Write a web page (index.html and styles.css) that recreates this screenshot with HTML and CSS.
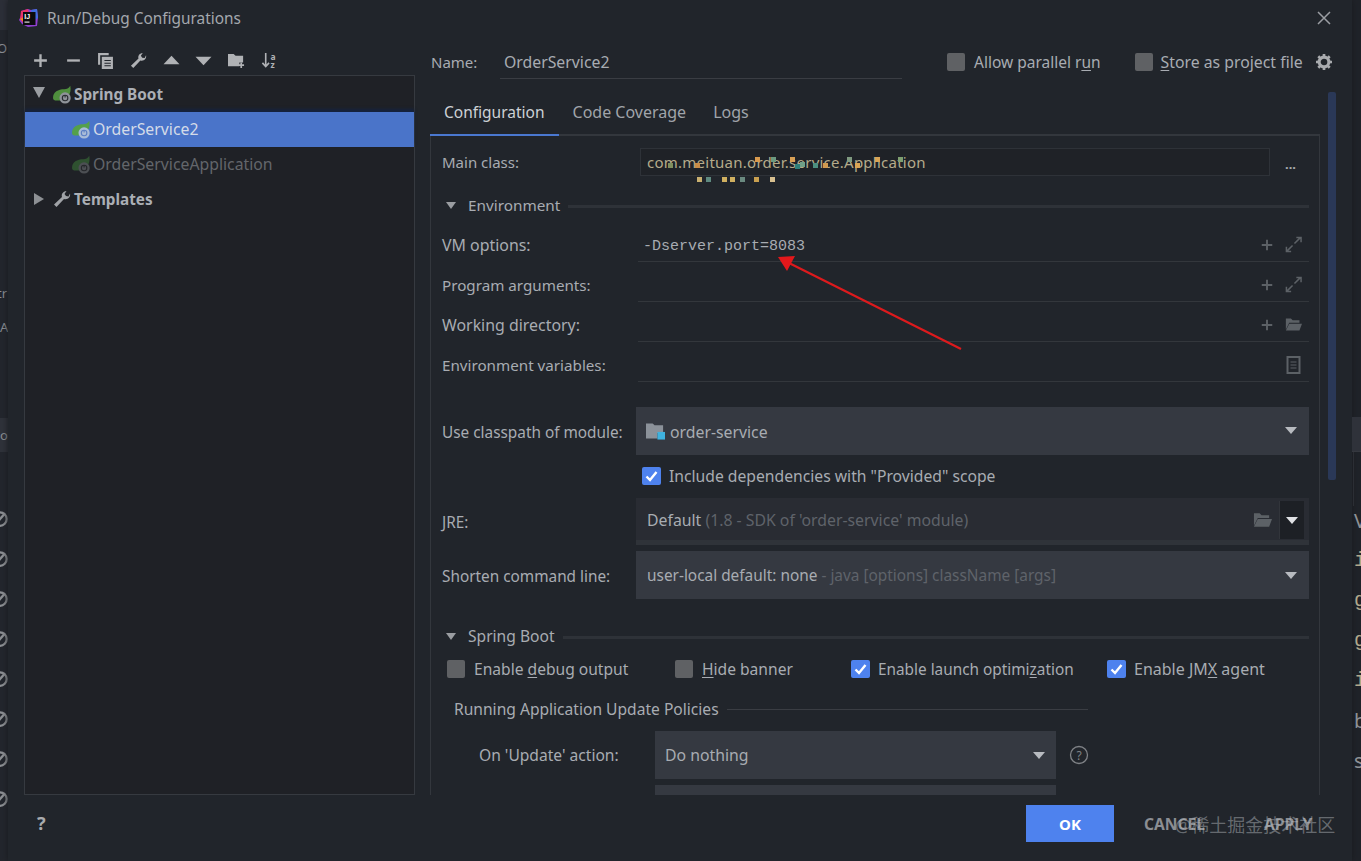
FILE: index.html
```html
<!DOCTYPE html>
<html lang="en">
  <head>
    <meta charset="UTF-8" />
    <title>Run/Debug Configurations</title>
    <link rel="stylesheet" href="styles.css">
  </head>
  <body>
    <svg class="defs" width="0" height="0">
      <symbol id="plus" viewBox="0 0 16 16"><path d="M8 2v12M2 8h12" stroke="currentColor" stroke-width="2.2" fill="none"/></symbol>
      <symbol id="expand" viewBox="0 0 18 18"><path d="M10 8l6-6M12 1.500h5v5M8 10l-6 6M1.500 11.500v5h5" stroke="currentColor" stroke-width="1.600" fill="none"/></symbol>
      <symbol id="folderOpen" viewBox="0 0 20 16"><path d="M1 1h6l2 2h8v3H5L1 14zM5 7h15l-3 8H1z" fill="currentColor"/></symbol>
      <symbol id="wrench" viewBox="0 0 18 18"><path d="M1 14.500L9 7c-.8-2.600.6-5.500 4.500-6l-2 3 1.500 2 2.500.4L17 3.500c.8 3.600-2.300 6.500-6 5.500L3.500 17z" fill="currentColor"/></symbol>
      <symbol id="spring" viewBox="0 0 24 22">
        <path d="M1 15C1 8 7 5 14 5c3 0 5-1 7-4 1 5 0 9-2 11l-8 6H5C3 18 1 17 1 15z" fill="currentColor"/>
        <circle cx="15" cy="15" r="6.500" fill="var(--gear)"/>
        <circle cx="15" cy="15" r="3.200" fill="none" stroke="var(--gear-in)" stroke-width="1.300"/>
        <path d="M15 11.500v3" stroke="var(--gear-in)" stroke-width="1.300"/>
      </symbol>
      <symbol id="blocked" viewBox="0 0 16 16"><circle cx="8" cy="8" r="6" fill="none" stroke="currentColor" stroke-width="2"/><path d="M3.500 13L12.500 3" stroke="currentColor" stroke-width="2"/></symbol>
    </svg>

    <div class="ide_left">
      <div class="ide_tab"></div>
      <div class="ide_txt first_txt">O</div>
      <div class="ide_txt tr_txt">tr</div>
      <div class="ide_txt a_txt">A</div>
      <div class="ide_band">o</div>
      <div class="ide_blocks">
        <svg class="ide_block"><use href="#blocked"/></svg>
        <svg class="ide_block"><use href="#blocked"/></svg>
        <svg class="ide_block"><use href="#blocked"/></svg>
        <svg class="ide_block"><use href="#blocked"/></svg>
        <svg class="ide_block"><use href="#blocked"/></svg>
        <svg class="ide_block"><use href="#blocked"/></svg>
        <svg class="ide_block"><use href="#blocked"/></svg>
        <svg class="ide_block"><use href="#blocked"/></svg>
      </div>
    </div>

    <div class="dialog">
      <div class="title_bar">
        <svg class="app_logo" viewBox="0 0 20 20">
          <path d="M2 3l7-2 3 1 6-1 1 8-1 9-9 1-6-3-3-4 2-4z" fill="#8f3fd0"/>
          <path d="M2 3l7-2 2 9-6 6-4-5z" fill="#e8336b"/>
          <path d="M12 2l6-1 1 9-5 3z" fill="#3f6fe0"/>
          <path d="M1 11l4-2 1 6z" fill="#f08a24"/>
          <rect x="4" y="4" width="12.500" height="13" fill="#0b0b0d"/>
          <text x="5.200" y="10.800" class="logo_txt">IJ</text>
          <rect x="5.500" y="13.500" width="5" height="1.200" fill="#ddd"/>
        </svg>
        <span class="title_txt">Run/Debug Configurations</span>
        <svg class="close_btn" viewBox="0 0 14 14"><path d="M1 1l12 12M13 1L1 13" stroke="currentColor" stroke-width="1.500"/></svg>
      </div>

      <div class="main">
        <div class="side">
          <div class="toolbar">
            <div class="tool"><svg class="tool_ico"><use href="#plus"/></svg></div>
            <div class="tool"><svg class="tool_ico" viewBox="0 0 16 16"><path d="M2 8h12" stroke="currentColor" stroke-width="2.200"/></svg></div>
            <div class="tool"><svg class="tool_ico" viewBox="0 0 16 16"><path d="M1 1h10v2H3v9H1z" fill="currentColor"/><path d="M4.500 4.500H15V16H4.500z" fill="currentColor"/><path d="M7 8h6M7 10.500h6M7 13h6" stroke="#21252b"/></svg></div>
            <div class="tool"><svg class="tool_ico"><use href="#wrench"/></svg></div>
            <div class="tool"><svg class="tool_ico" viewBox="0 0 16 16"><path d="M8 3.500l7.500 8H.5z" fill="currentColor"/></svg></div>
            <div class="tool"><svg class="tool_ico" viewBox="0 0 16 16"><path d="M.5 4.500h15L8 12.500z" fill="currentColor"/></svg></div>
            <div class="tool"><svg class="tool_ico" viewBox="0 0 18 16"><path d="M0 1h6l2 2h8v7h-4v4H0z" fill="currentColor"/><path d="M14 10v6M11 13h6" stroke="currentColor" stroke-width="1.800"/></svg></div>
            <div class="tool"><svg class="tool_ico" viewBox="0 0 18 18"><path d="M5 1v14M1.500 11.500L5 15.500l3.500-4" stroke="currentColor" stroke-width="1.700" fill="none"/><text x="10" y="8" class="az_txt">a</text><text x="10" y="17" class="az_txt">z</text></svg></div>
          </div>
          <div class="tree">
            <div class="tree_row tree_top">
              <span class="tri_down"></span>
              <svg class="spring_ico"><use href="#spring"/></svg>
              <span>Spring Boot</span>
            </div>
            <div class="tree_row tree_child tree_sel">
              <svg class="spring_ico"><use href="#spring"/></svg>
              <span>OrderService2</span>
            </div>
            <div class="tree_row tree_child tree_off">
              <svg class="spring_ico"><use href="#spring"/></svg>
              <span>OrderServiceApplication</span>
            </div>
            <div class="tree_row tree_top">
              <span class="tri_right"></span>
              <svg class="wrench_ico"><use href="#wrench"/></svg>
              <span>Templates</span>
            </div>
          </div>
        </div>

        <div class="right">
          <div class="content">
            <div class="name_row">
              <span class="name_lbl">Name:</span>
              <span class="name_field">OrderService2</span>
              <label class="check check_parallel"><span class="box"></span><span>Allow parallel r<u>u</u>n</span></label>
              <label class="check check_store"><span class="box"></span><span><u>S</u>tore as project file</span></label>
              <svg class="gear_ico" viewBox="0 0 18 18"><circle cx="9" cy="9" r="5.500" fill="none" stroke="currentColor" stroke-width="3.500"/><path d="M9 0v3M9 15v3M0 9h3M15 9h3M2.600 2.600l2.200 2.200M13.200 13.200l2.200 2.200M2.600 15.400l2.200-2.200M13.200 4.800l2.200-2.200" stroke="currentColor" stroke-width="3"/></svg>
            </div>

            <div class="tabs">
              <div class="tab tab_on">Configuration</div>
              <div class="tab">Code Coverage</div>
              <div class="tab">Logs</div>
            </div>

            <div class="panel">
              <div class="main_class">
                <span class="lbl">Main class:</span>
                <div class="class_field">
                  <span class="class_txt">com.meituan.order.service.Application</span>
                  <span class="mosaic"></span>
                </div>
                <span class="dots">...</span>
              </div>

              <div class="section env_section">
                <span class="tri_small"></span>
                <span class="section_txt">Environment</span>
                <span class="section_line"></span>
              </div>

              <div class="text_row">
                <span class="lbl lbl_wide">VM options:</span>
                <div class="text_field">
                  <span class="mono">-Dserver.port=8083</span>
                  <svg class="field_ico plus_ico"><use href="#plus"/></svg>
                  <svg class="field_ico"><use href="#expand"/></svg>
                </div>
              </div>
              <div class="text_row">
                <span class="lbl">Program arguments:</span>
                <div class="text_field">
                  <svg class="field_ico plus_ico"><use href="#plus"/></svg>
                  <svg class="field_ico"><use href="#expand"/></svg>
                </div>
              </div>
              <div class="text_row">
                <span class="lbl lbl_wide">Working directory:</span>
                <div class="text_field">
                  <svg class="field_ico plus_ico"><use href="#plus"/></svg>
                  <svg class="field_ico"><use href="#folderOpen"/></svg>
                </div>
              </div>
              <div class="text_row">
                <span class="lbl">Environment variables:</span>
                <div class="text_field">
                  <svg class="field_ico doc_ico" viewBox="0 0 14 18"><path d="M1 1h12v16H1z" fill="none" stroke="currentColor" stroke-width="2"/><path d="M4 6h6M4 9h6M4 12h6" stroke="currentColor" stroke-width="1.200"/></svg>
                </div>
              </div>

              <div class="combo_row module_row">
                <span class="lbl lbl_combo">Use classpath of module:</span>
                <div class="combo combo_wide">
                  <svg class="module_ico" viewBox="0 0 20 18"><path d="M0 1h7l2 2h9v8h-6v6H0z" fill="#8b9199"/><rect x="12" y="10" width="8" height="8" fill="#3fb2de"/></svg>
                  <span>order-service</span>
                  <span class="arrow"></span>
                </div>
              </div>
              <label class="check include_check"><span class="box box_on"><svg viewBox="0 0 18 18"><path d="M4 9.500l3.500 3.500L14 5" stroke="#fff" stroke-width="2.400" fill="none"/></svg></span><span>Include dependencies with "Provided" scope</span></label>

              <div class="combo_row jre_row">
                <span class="lbl lbl_combo">JRE:</span>
                <div class="combo combo_jre combo_wide">
                  <span>Default <span class="hint">(1.8 - SDK of 'order-service' module)</span></span>
                  <svg class="jre_folder"><use href="#folderOpen"/></svg>
                  <span class="arrow_btn"><span class="arrow arrow_w"></span></span>
                </div>
              </div>
              <div class="combo_row short_row">
                <span class="lbl lbl_combo">Shorten command line:</span>
                <div class="combo">
                  <span>user-local default: none <span class="hint">- java [options] className [args]</span></span>
                  <span class="arrow"></span>
                </div>
              </div>

              <div class="section boot_section">
                <span class="tri_small"></span>
                <span class="section_txt">Spring Boot</span>
                <span class="section_line"></span>
              </div>

              <div class="boot_checks">
                <label class="check boot_a"><span class="box"></span><span>Enable <u>d</u>ebug output</span></label>
                <label class="check boot_b"><span class="box"></span><span><u>H</u>ide banner</span></label>
                <label class="check boot_c"><span class="box box_on"><svg viewBox="0 0 18 18"><path d="M4 9.500l3.500 3.500L14 5" stroke="#fff" stroke-width="2.400" fill="none"/></svg></span><span>Enable launch optimi<u>z</u>ation</span></label>
                <label class="check boot_d"><span class="box box_on"><svg viewBox="0 0 18 18"><path d="M4 9.500l3.500 3.500L14 5" stroke="#fff" stroke-width="2.400" fill="none"/></svg></span><span>Enable JM<u>X</u> agent</span></label>
              </div>

              <div class="policy_head">
                <span class="section_txt">Running Application Update Policies</span>
                <span class="policy_line"></span>
              </div>
              <div class="update_row">
                <span class="lbl update_lbl">On 'Update' action:</span>
                <div class="combo combo_update">
                  <span>Do nothing</span>
                  <span class="arrow"></span>
                </div>
                <svg class="help_ico" viewBox="0 0 20 20"><circle cx="10" cy="10" r="8.500" fill="none" stroke="currentColor" stroke-width="1.300"/><text x="10" y="14.500" class="help_txt">?</text></svg>
              </div>
              <div class="combo_stub"></div>
            </div>
          </div>
          <div class="scrollbar"></div>
        </div>
      </div>

      <div class="footer">
        <span class="help_mark">?</span>
        <button class="btn_ok">OK</button>
        <span class="btn_txt btn_cancel">CANCEL</span>
        <span class="btn_txt btn_apply">APPLY</span>
      </div>
    </div>

    <div class="ide_right">
      <div class="ide_right_band"></div>
      <div class="ide_right_gutter"></div>
      <div class="ide_code">V</div>
      <div class="ide_code mono_code">i</div>
      <div class="ide_code mono_code">g</div>
      <div class="ide_code mono_code">g</div>
      <div class="ide_code mono_code">i</div>
      <div class="ide_code">b</div>
      <div class="ide_code">s</div>
    </div>

    <svg class="red_arrow" viewBox="0 0 200 110" width="200" height="110">
      <path d="M186 95L14 9" stroke="#dc1a1d" stroke-width="2.300"/>
      <path d="M3 3L20 2 12 17z" fill="#e3181b"/>
    </svg>
    <div class="watermark">@稀土掘金技术社区</div>
  </body>
</html>
```

FILE: styles.css
```css
* {
  box-sizing: border-box;
}

body {
  margin: 0;
  width: 1361px;
  height: 861px;
  overflow: hidden;
  display: flex;
  position: relative;
  background-color: #202329;
  font-family: "Noto Sans", "Open Sans", sans-serif;
  font-size: 15.6px;
  color: #a8acb2;
}

.defs {
  position: absolute;
}

label {
  cursor: default;
}

u {
  text-underline-offset: 2px;
}

/* ide behind the dialog */
.ide_left {
  width: 8px;
  height: 861px;
  overflow: hidden;
  flex-shrink: 0;
  background-color: #23262d;
  color: #8c8f94;
  font-size: 13px;
}
.ide_tab {
  height: 30px;
  background-color: #2c2f38;
}
.ide_txt {
  height: 20px;
  line-height: 20px;
  white-space: nowrap;
}
.first_txt {
  margin-top: 8px;
  margin-left: -3px;
}
.tr_txt {
  margin-top: 225px;
  margin-left: -3px;
}
.a_txt {
  margin-top: 14px;
}
.ide_band {
  margin-top: 81px;
  height: 34px;
  line-height: 34px;
  background-color: #2f323a;
}
.ide_blocks {
  margin-top: 47px;
  margin-left: -9px;
}
.ide_block {
  display: block;
  width: 18px;
  height: 40px;
  color: #8e9195;
}

.ide_right {
  width: 9px;
  height: 861px;
  overflow: hidden;
  flex-shrink: 0;
  padding-left: 3px;
  padding-top: 417px;
  color: #8e9195;
  font-size: 20px;
}
.ide_right_band {
  height: 35px;
  margin-left: -3px;
  background-color: #2f323a;
  border-bottom: 1px solid #35383f;
}
.ide_right_gutter {
  height: 54px;
  margin-left: -2px;
  border-left: 1px solid #2b2e34;
}
.ide_code {
  height: 40px;
  line-height: 30px;
  margin-left: -1px;
}
.mono_code {
  font-family: "Liberation Mono", monospace;
  color: #b0a88c;
}

.dialog {
  flex: 1;
  min-width: 0;
  height: 861px;
  display: flex;
  flex-direction: column;
  background-color: #21252b;
  box-shadow: 0 0 6px #181a1e;
}

.title_bar {
  height: 36px;
  display: flex;
  align-items: center;
  padding-left: 11px;
  padding-right: 21px;
  flex-shrink: 0;
}
.app_logo {
  width: 20px;
  height: 20px;
  margin-right: 8px;
  margin-top: -1px;
}
.logo_txt {
  font-family: "Liberation Sans", sans-serif;
  font-size: 7px;
  font-weight: bold;
  fill: #fff;
}
.title_txt {
  color: #a4a8ae;
  font-size: 15.4px;
  flex: 1;
}
.close_btn {
  width: 14px;
  height: 14px;
  color: #9b9ea3;
}

.main {
  height: 759px;
  display: flex;
  flex-shrink: 0;
}

/* left side */
.side {
  width: 422px;
  padding-left: 16px;
  flex-shrink: 0;
}
.toolbar {
  height: 39px;
  display: flex;
  align-items: center;
  padding-top: 9px;
  color: #b0b2b5;
}
.tool {
  width: 32.7px;
  display: flex;
  justify-content: center;
}
.tool_ico {
  width: 17px;
  height: 17px;
}
.tree {
  width: 391px;
  height: 720px;
  border: 1px solid #363a40;
  background-color: #1f2126;
  padding-top: 1px;
}
.tree_row {
  height: 35px;
  display: flex;
  align-items: center;
  white-space: nowrap;
  padding-bottom: 2px;
}
.tree_top {
  font-weight: bold;
  font-size: 15.3px;
  color: #abafb5;
  padding-left: 8px;
}
.tree_child {
  padding-left: 46px;
  font-size: 15.8px;
}
.tree_sel {
  background-color: #4a74c9;
  color: #d4dbe8;
  box-shadow: 0 -3px 3px #15233f;
}
.tree_off {
  color: #63666b;
}
.tri_down {
  width: 0;
  height: 0;
  border-left: 6px solid transparent;
  border-right: 6px solid transparent;
  border-top: 11px solid #9a9da1;
  margin-right: 7px;
  margin-top: -2px;
}
.tri_right {
  width: 0;
  height: 0;
  border-top: 6px solid transparent;
  border-bottom: 6px solid transparent;
  border-left: 10px solid #8d9094;
  margin-right: 9px;
  margin-left: 1px;
}
.spring_ico {
  width: 21px;
  height: 19px;
  margin-right: 1px;
  color: #4f8f3d;
  --gear: #8f9399;
  --gear-in: #2a2d32;
  margin-top: 2px;
}
.tree_sel .spring_ico {
  color: #54a04a;
  --gear: #a9bcd8;
  --gear-in: #5c7fc4;
}
.tree_off .spring_ico {
  color: #2f5130;
  --gear: #4c4f53;
  --gear-in: #25272b;
}
.wrench_ico {
  width: 18px;
  height: 18px;
  margin-right: 3px;
  color: #a0a3a7;
}
.az_txt {
  font-family: "Noto Sans", sans-serif;
  font-size: 9px;
  font-weight: bold;
  fill: currentColor;
}

/* right side */
.right {
  flex: 1;
  min-width: 0;
  display: flex;
}
.content {
  width: 890px;
  flex-shrink: 0;
}
.name_row {
  height: 56px;
  display: flex;
  align-items: flex-start;
  position: relative;
  padding-top: 16px;
  padding-left: 1px;
}
.name_row > * {
  flex-shrink: 0;
}
.name_lbl {
  width: 69px;
  font-size: 15px;
}
.name_field {
  width: 402px;
  height: 27px;
  padding-left: 4px;
  border-bottom: 1px solid #3a3d43;
  line-height: 20px;
  font-size: 15.8px;
}
.name_row .check {
  height: 20px;
}
.check {
  display: flex;
  align-items: center;
  white-space: nowrap;
}
.box {
  width: 18px;
  height: 18px;
  border-radius: 2px;
  background-color: #5f6164;
  margin-right: 9px;
  flex-shrink: 0;
}
.box_on {
  background-color: #4e82ee;
  width: 19px;
}
.box_on svg {
  display: block;
  width: 19px;
  height: 18px;
}
.check_parallel {
  margin-left: 45px;
  font-size: 15.5px;
}
.check_store {
  margin-left: 34px;
  font-size: 15.8px;
}
.check_store .box {
  margin-right: 8px;
}
.gear_ico {
  width: 16px;
  height: 16px;
  margin-left: 13px;
  margin-top: 2px;
  color: #a9abae;
}

.tabs {
  height: 44px;
  display: flex;
  border-bottom: 2px solid #33373d;
  color: #a0a4aa;
  font-size: 16px;
}
.tab {
  padding: 0 14px;
  line-height: 40px;
  height: 44px;
}
.tab_on {
  color: #cdd1d6;
  border-bottom: 2px solid #4a78d0;
  font-size: 15.5px;
}
.tab:nth-child(3) {
  padding-left: 13px;
}

.panel {
  height: 659px;
  overflow: hidden;
  border-left: 1px solid #33373d;
  border-right: 1px solid #33373d;
  padding-left: 11px;
  padding-right: 10px;
  padding-top: 12px;
}
.lbl {
  flex-shrink: 0;
  white-space: nowrap;
}

.main_class {
  display: flex;
  align-items: center;
  height: 28px;
}
.main_class .lbl {
  width: 198px;
  font-size: 15px;
}
.class_field {
  width: 630px;
  height: 28px;
  border: 1px solid #2e3238;
  position: relative;
  padding-left: 6px;
  line-height: 27px;
  background-color: #1f2227;
  font-size: 15px;
}
.class_txt {
  color: #b5ab8b;
  white-space: nowrap;
  letter-spacing: 0.25px;
}
.mosaic {
  position: absolute;
  left: 0;
  top: 0;
  width: 5px;
  height: 5px;
  box-shadow:
    114px 8px #d89a4e, 130px 8px #6c9a80, 149px 8px #d8a055, 154px 15px #2f7f7a, 159px 13px #70a088,
    27px 14px #7f8f5e, 54px 14px #c88c48, 172px 14px #4d8f80, 182px 14px #d09a50,
    206px 8px #7f9a80, 214px 14px #d8a455, 234px 8px #d8a455, 257px 8px #7f9f70,
    56px 28px #c9b070, 65px 28px #5f8a80, 81px 28px #d0b060, 89px 28px #d0b060, 99px 28px #6a8a80,
    113px 28px #c9a050, 129px 28px #d8c090;
}
.dots {
  margin-left: 15px;
  line-height: 1;
  font-weight: bold;
  color: #a9abae;
  margin-top: 4px;
  font-size: 13px;
}

.section {
  display: flex;
  align-items: center;
  height: 20px;
}
.tri_small {
  width: 0;
  height: 0;
  border-left: 5px solid transparent;
  border-right: 5px solid transparent;
  border-top: 7px solid #9a9da1;
  margin-right: 12px;
  margin-left: 4px;
}
.section_txt {
  white-space: nowrap;
}
.section_line {
  flex: 1;
  height: 3px;
  background-color: #2e3238;
  margin-left: 8px;
  margin-top: 3px;
}
.env_section {
  margin-top: 19px;
  margin-bottom: 7px;
}
.env_section .section_txt {
  font-size: 15.3px;
}

.text_row {
  height: 40px;
  display: flex;
  align-items: center;
}
.text_row .lbl {
  width: 196px;
  padding-top: 5px;
  font-size: 15.2px;
}
.text_row .lbl_wide {
  font-size: 15.9px;
}
.text_field {
  flex: 1;
  height: 40px;
  border-bottom: 1px solid #33373c;
  display: flex;
  align-items: center;
  justify-content: flex-end;
  padding-top: 6px;
  padding-right: 7px;
  position: relative;
  color: #5c6166;
}
.mono {
  position: absolute;
  left: 5px;
  top: 16px;
  font-family: "Liberation Mono", monospace;
  font-size: 15px;
  color: #a8acb2;
}
.field_ico {
  width: 17px;
  height: 17px;
}
.plus_ico {
  width: 14px;
  height: 14px;
  margin-right: 11px;
}
.doc_ico {
  width: 15px;
  height: 18px;
  margin-right: 1px;
}

.combo_row {
  display: flex;
  align-items: center;
}
.lbl_combo {
  width: 194px;
  font-size: 15.35px;
  padding-top: 1px;
}
.combo {
  flex: 1;
  height: 48px;
  background-color: #353941;
  display: flex;
  align-items: center;
  padding-left: 11px;
  padding-right: 12px;
  position: relative;
  white-space: nowrap;
  font-size: 15.4px;
}
.combo_wide {
  font-size: 15.8px;
}
.module_row {
  margin-top: 25px;
}
.module_row .combo > span {
  padding-top: 1px;
}
.module_ico {
  width: 19px;
  height: 18px;
  margin-left: -1px;
  margin-right: 5px;
}
.arrow {
  width: 0;
  height: 0;
  border-left: 6px solid transparent;
  border-right: 6px solid transparent;
  border-top: 7px solid #b8bbc0;
  margin-left: auto;
}
.module_row .arrow {
  padding-top: 0;
}
.arrow_w {
  border-top-color: #e0e2e5;
  margin: 0;
}
.include_check {
  margin-top: 12px;
  margin-left: 200px;
  height: 18px;
  font-size: 15.7px;
}
.include_check .box {
  margin-right: 8px;
}
.jre_row {
  margin-top: 13px;
  height: 47px;
}
.combo_jre {
  height: 47px;
  background-color: #292c33;
  border-bottom: 5px solid #2f3339;
  padding-right: 5px;
  padding-top: 2px;
}
.hint {
  color: #5f636a;
}
.jre_folder {
  width: 19px;
  height: 16px;
  margin-left: auto;
  margin-right: 7px;
  color: #5c6166;
}
.arrow_btn {
  width: 25px;
  height: 38px;
  background-color: #1d2025;
  border-left: 1px solid #32353b;
  display: flex;
  align-items: center;
  justify-content: center;
}
.short_row {
  margin-top: 6px;
}

.boot_section {
  margin-top: 27px;
}
.boot_checks {
  display: flex;
  margin-top: 13px;
  margin-left: 5px;
  height: 20px;
}
.boot_a {
  width: 228px;
}
.boot_b {
  width: 176px;
}
.boot_c {
  width: 256px;
  font-size: 15.35px;
}
.boot_d {
  font-size: 16px;
}
.boot_checks .box_on {
  margin-right: 8px;
}
.policy_head {
  display: flex;
  align-items: center;
  margin-top: 20px;
  margin-left: 12px;
  height: 20px;
}
.policy_line {
  width: 361px;
  height: 1px;
  background-color: #3a3d43;
  margin-left: 8px;
}
.update_row {
  display: flex;
  align-items: center;
  margin-top: 12px;
  height: 48px;
}
.update_lbl {
  width: 176px;
  margin-left: 37px;
}
.combo_update {
  flex: none;
  width: 401px;
  padding-left: 10px;
  padding-right: 11px;
  font-size: 15.8px;
}
.help_ico {
  width: 20px;
  height: 20px;
  margin-left: 13px;
  color: #7f8286;
}
.help_txt {
  font-size: 12px;
  text-anchor: middle;
  fill: currentColor;
}
.combo_stub {
  width: 401px;
  height: 20px;
  margin-top: 6px;
  margin-left: 213px;
  background-color: #353941;
}

.scrollbar {
  width: 8px;
  height: 388px;
  margin-top: 56px;
  margin-left: 8px;
  border-radius: 2px;
  background-color: #2a3857;
}

/* bottom buttons */
.footer {
  flex: 1;
  display: flex;
  align-items: flex-start;
  padding-top: 10px;
  padding-left: 29px;
  position: relative;
  font-weight: bold;
  color: #8f9297;
}
.help_mark {
  font-size: 18px;
  margin-top: 6px;
  width: 989px;
  color: #a9abae;
}
.btn_ok {
  width: 88px;
  height: 37px;
  border: none;
  background-color: #4e82ee;
  color: #fff;
  font-family: inherit;
  font-size: 15px;
  font-weight: bold;
}
.btn_txt {
  line-height: 38px;
  color: #8b8e93;
}
.btn_cancel {
  margin-left: 30px;
  width: 120px;
}

.red_arrow {
  position: absolute;
  left: 775px;
  top: 254px;
}
.watermark {
  position: absolute;
  left: 1175px;
  top: 812px;
  font-family: "Noto Sans", "Noto Sans CJK SC", sans-serif;
  font-size: 18px;
  line-height: 26px;
  color: rgba(190, 193, 198, 0.45);
  white-space: nowrap;
}
```
